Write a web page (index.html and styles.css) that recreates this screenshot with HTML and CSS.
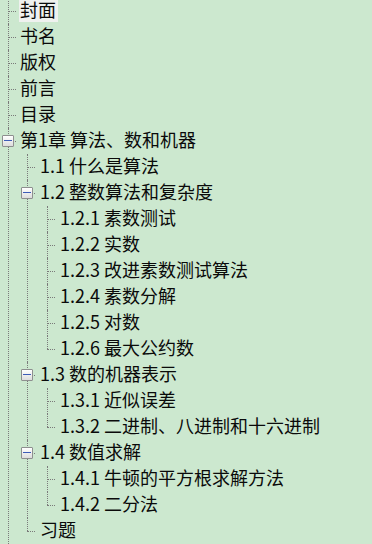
FILE: index.html
```html
<!DOCTYPE html>
<html lang="zh-CN">
<head>
    <meta charset="UTF-8">
    <meta name="viewport" content="width=device-width, initial-scale=1.0">
    <title>目录</title>
    <link rel="stylesheet" href="styles.css">
</head>

<body>
    <ul class="tree">
        <li><span class="label selected">封面</span></li>
        <li><span class="label">书名</span></li>
        <li><span class="label">版权</span></li>
        <li><span class="label">前言</span></li>
        <li><span class="label">目录</span></li>
        <li class="open">
            <span class="toggle"></span><span class="label">第1章 算法、数和机器</span>
            <ul>
                <li><span class="label">1.1 什么是算法</span></li>
                <li class="open">
                    <span class="toggle"></span><span class="label">1.2 整数算法和复杂度</span>
                    <ul>
                        <li><span class="label">1.2.1 素数测试</span></li>
                        <li><span class="label">1.2.2 实数</span></li>
                        <li><span class="label">1.2.3 改进素数测试算法</span></li>
                        <li><span class="label">1.2.4 素数分解</span></li>
                        <li><span class="label">1.2.5 对数</span></li>
                        <li class="last"><span class="label">1.2.6 最大公约数</span></li>
                    </ul>
                </li>
                <li class="open">
                    <span class="toggle"></span><span class="label">1.3 数的机器表示</span>
                    <ul>
                        <li><span class="label">1.3.1 近似误差</span></li>
                        <li class="last"><span class="label">1.3.2 二进制、八进制和十六进制</span></li>
                    </ul>
                </li>
                <li class="open">
                    <span class="toggle"></span><span class="label">1.4 数值求解</span>
                    <ul>
                        <li><span class="label">1.4.1 牛顿的平方根求解方法</span></li>
                        <li class="last"><span class="label">1.4.2 二分法</span></li>
                    </ul>
                </li>
                <li class="last"><span class="label">习题</span></li>
            </ul>
        </li>
    </ul>
</body>
</html>
```

FILE: styles.css
```css
body {
    margin: 0;
    background-color: #CCE8CF;
    font-family: "Microsoft YaHei", "Noto Sans CJK SC", sans-serif;
    font-size: 18px;
    color: #0a0a0a;
    overflow: hidden;
}

.tree {
    margin: -2px 0 0 0;
}

.tree,
.tree ul {
    list-style: none;
    padding: 0;
    margin-left: 0;
}

.tree li {
    display: flow-root;
    position: relative;
    padding-left: 20px;
}

/* vertical dotted line */
.tree li::before {
    content: "";
    position: absolute;
    left: 8px;
    top: 0;
    bottom: 0;
    border-left: 1px dotted #7a7a7a;
}

.tree ul li::before,
.tree ul li::after {
    left: 7px;
}

.tree li.last::before {
    bottom: auto;
    height: 13px;
}

/* horizontal connector */
.tree li::after {
    content: "";
    position: absolute;
    left: 8px;
    top: 13px;
    width: 8px;
    border-top: 1px dotted #7a7a7a;
}

.label {
    display: block;
    width: fit-content;
    height: 18px;
    line-height: 18px;
    padding: 0 2px 4px 1px;
    margin: 2px 0 2px -1px;
    white-space: nowrap;
}

.label.selected {
    background-color: #EFF1EF;
}

/* expand box */
.toggle {
    position: absolute;
    left: 2px;
    top: 7px;
    width: 10px;
    height: 10px;
    border: 1px solid #8e8f8f;
    border-radius: 1px;
    background: linear-gradient(#ffffff, #dcdcdc);
    z-index: 1;
}

.tree ul .toggle {
    left: 1px;
}

.toggle::after {
    content: "";
    position: absolute;
    left: 1px;
    right: 1px;
    top: 4px;
    height: 1px;
    background-color: #3c5cb8;
}
```
